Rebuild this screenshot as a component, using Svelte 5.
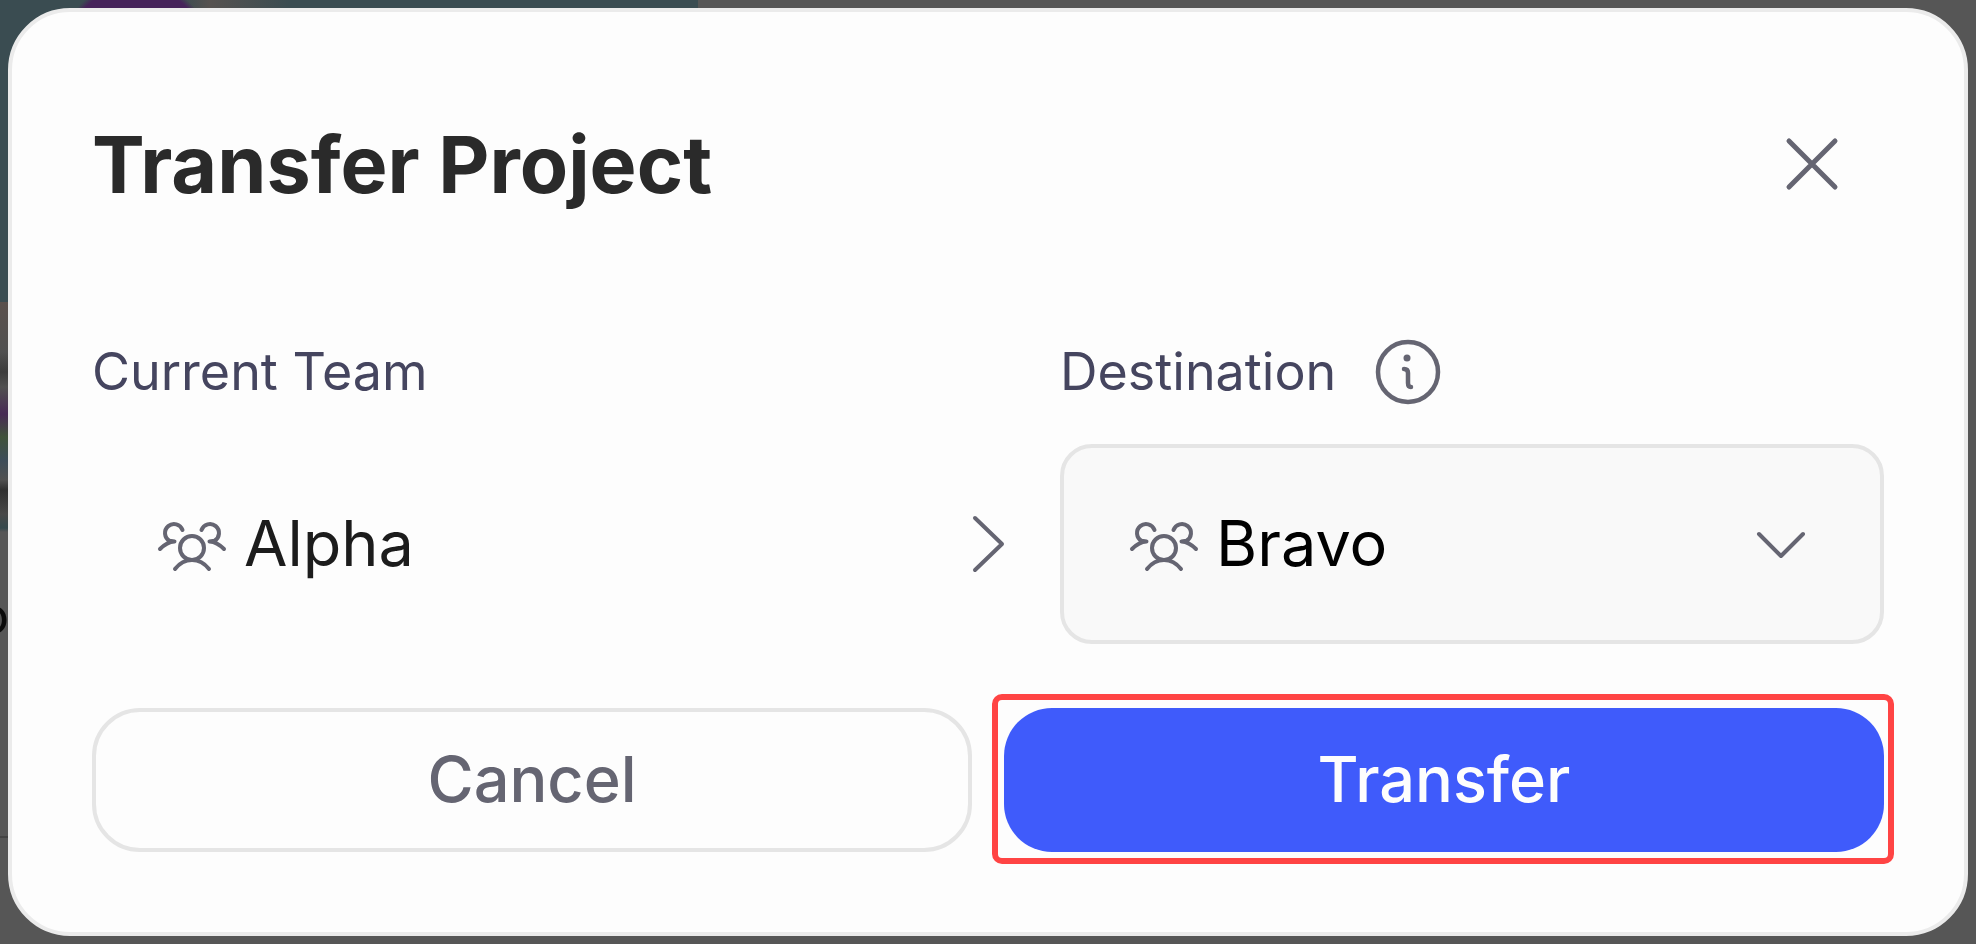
<script>
  let teams = ['Bravo', 'Charlie', 'Delta'];
  let currentTeam = 'Alpha';
  let destination = $state('Bravo');
</script>

{#snippet teamIcon()}
  <svg class="team-icon" viewBox="0 0 72 72" aria-hidden="true">
    <circle cx="36" cy="40" r="12" />
    <path d="M19 61Q26 52 36 52T53 61" />
    <path d="M26.5 22A9 9 0 1 0 13.5 32.8L18.5 33.5Q11 34 4 41" />
    <path d="M45.5 22A9 9 0 1 1 58.5 32.8L53.5 33.5Q61 34 68 41" />
  </svg>
{/snippet}

<div class="backdrop">
  <span class="page-text" aria-hidden="true">o</span>
  <div class="modal" role="dialog" aria-labelledby="modal-title">
    <header class="modal-header">
      <h1 id="modal-title">Transfer Project</h1>
      <button class="close" aria-label="Close">
        <svg viewBox="0 0 64 64"><path d="M9 9L55 55M55 9L9 55" /></svg>
      </button>
    </header>

    <div class="fields">
      <div class="field">
        <div class="field-label">Current Team</div>
        <div class="team">
          {@render teamIcon()}
          <span class="team-name">{currentTeam}</span>
        </div>
      </div>

      <svg class="arrow" viewBox="0 0 64 64" aria-hidden="true"><path d="M19 6L46 32L19 58" /></svg>

      <div class="field">
        <div class="field-label">
          <label for="destination">Destination</label>
          <svg class="info" viewBox="0 0 72 72" aria-hidden="true">
            <circle cx="36" cy="36" r="30" />
            <circle class="dot" cx="35" cy="22" r="3.5" />
            <path d="M32 33Q36 33 36 37V47Q36 51 39 51" />
          </svg>
        </div>
        <div class="team select-box">
          {@render teamIcon()}
          <select class="team-name" id="destination" bind:value={destination}>
            {#each teams as team}
              <option value={team}>{team}</option>
            {/each}
          </select>
          <svg class="chevron" viewBox="0 0 72 72" aria-hidden="true"><path d="M15 26L37 48L59 26" /></svg>
        </div>
      </div>
    </div>

    <footer class="actions">
      <button class="btn cancel">Cancel</button>
      <div class="highlight">
        <button class="btn primary">Transfer</button>
      </div>
    </footer>
  </div>
</div>

<style>
  :global(body) {
    margin: 0;
    background: #565656;
  }

  .backdrop {
    position: relative;
    min-height: 100vh;
    box-sizing: border-box;
    padding: 8px;
    overflow: hidden;
    /* dimmed page showing round the edges of the modal */
    background:
      radial-gradient(circle at 136px 56px, #46235a 70px, transparent 76px),
      linear-gradient(90deg, transparent, #565250 30px, transparent) 180px 0 / 110px 8px no-repeat,
      linear-gradient(#3a4c51, #3a4c51) 0 0 / 698px 302px no-repeat,
      linear-gradient(#5a504c, #505050 50px, #3c3c3c 70px, #505050 85px, #472a54 112px, #40523a 135px, #3d4c58 158px, #505050 178px, #303030 188px, #484848 212px, #35484c 226px, #565656) 0 302px / 8px 230px no-repeat,
      linear-gradient(#444444, #444444) 0 836px / 8px 2px no-repeat
      #565656;
    font-family: Inter, "Liberation Sans", sans-serif;
  }

  .page-text {
    position: absolute;
    top: 584px;
    left: -22px;
    font-size: 52px;
    line-height: 64px;
    color: #0c0c0c;
  }

  .modal {
    position: relative;
    padding: 80px;
    border: 4px solid #ebebeb;
    border-radius: 62px;
    background: #fdfdfd;
  }

  .modal-header {
    display: flex;
    align-items: center;
    justify-content: space-between;
    margin-bottom: 104px;
  }

  h1 {
    margin: 0;
    font-size: 79px;
    line-height: 96px;
    font-weight: 700;
    color: #2a2a2a;
  }

  button {
    font-family: inherit;
    cursor: pointer;
  }

  svg {
    flex: none;
    fill: none;
    stroke: #656572;
    stroke-width: 4;
    stroke-linecap: round;
    stroke-linejoin: round;
  }

  .close {
    display: flex;
    padding: 40px;
    border: none;
    background: none;
  }

  .close svg {
    width: 64px;
    height: 64px;
    stroke-width: 5;
  }

  .fields {
    display: grid;
    grid-template-columns: 1fr auto 1fr;
    gap: 40px;
    align-items: end;
    margin-bottom: 64px;
  }

  .field-label {
    display: flex;
    align-items: center;
    gap: 36px;
    height: 64px;
    margin-bottom: 40px;
    font-size: 52px;
    line-height: 64px;
    color: #45455f;
  }

  .info {
    width: 72px;
    height: 72px;
    stroke-width: 4.5;
  }

  .info .dot {
    fill: #656572;
    stroke: none;
  }

  .team {
    display: flex;
    align-items: center;
    gap: 16px;
    height: 200px;
    box-sizing: border-box;
    padding: 0 64px;
    font-size: 63px;
    color: #1c1c1c;
  }

  .team-name {
    padding: 0 0 2px;
  }

  .team-icon,
  .chevron {
    width: 72px;
    height: 72px;
  }

  .arrow {
    width: 64px;
    height: 64px;
    margin-bottom: 68px;
  }

  .select-box {
    border: 4px solid #e5e5e5;
    border-radius: 32px;
    background: #f9f9f9;
  }

  select {
    flex: 1;
    min-width: 0;
    border: none;
    appearance: none;
    background: none;
    font: inherit;
    color: #000;
    cursor: pointer;
  }

  .actions {
    display: grid;
    grid-template-columns: 1fr 1fr;
    gap: 32px;
  }

  .btn {
    width: 100%;
    height: 144px;
    padding: 0 0 2px;
    border-radius: 48px;
    font-size: 63px;
    font-weight: 500;
  }

  .cancel {
    border: 4px solid #e5e5e5;
    background: #fdfdfd;
    color: #656572;
  }

  .primary {
    display: block;
    border: none;
    background: #3f5bfb;
    color: #fdfdfd;
  }

  .highlight {
    position: relative;
  }

  .highlight::after {
    content: '';
    position: absolute;
    inset: -14px -10px -12px -12px;
    border: 6px solid #ff4444;
    border-radius: 10px;
    pointer-events: none;
  }
</style>
